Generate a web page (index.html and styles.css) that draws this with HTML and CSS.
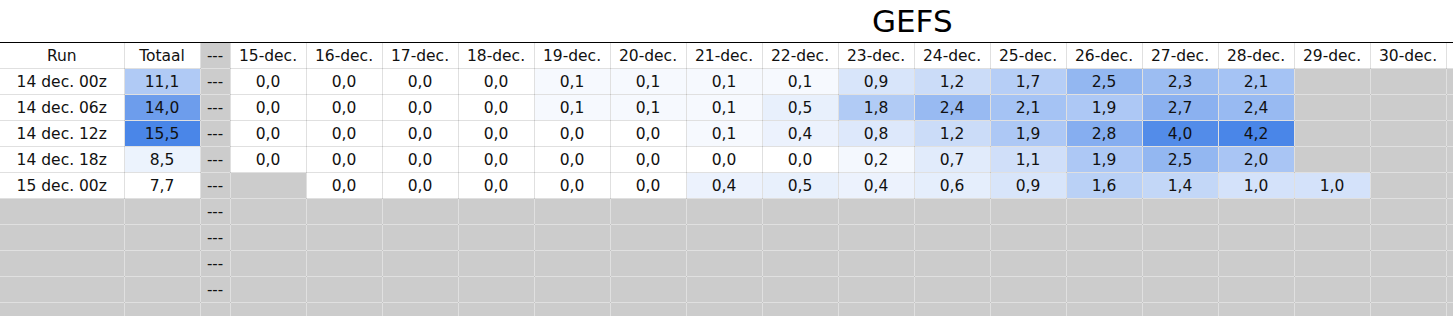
FILE: index.html
```html
<!DOCTYPE html>
<html>
<head>
<meta charset="utf-8">
<link rel="stylesheet" href="styles.css">
</head>
<body>
<div class="title-bar"><h1 class="title">GEFS</h1></div>
<table class="grid">
  <colgroup>
    <col class="w-run"><col class="w-tot"><col class="w-sep">
    <col class="w-day"><col class="w-day"><col class="w-day"><col class="w-day">
    <col class="w-day"><col class="w-day"><col class="w-day"><col class="w-day">
    <col class="w-day"><col class="w-day"><col class="w-day"><col class="w-day">
    <col class="w-day"><col class="w-day"><col class="w-day"><col class="w-day">
    <col class="w-end">
  </colgroup>
  <thead>
    <tr>
      <th>Run</th><th>Totaal</th><th class="sep">---</th>
      <th>15-dec.</th><th>16-dec.</th><th>17-dec.</th><th>18-dec.</th><th>19-dec.</th><th>20-dec.</th><th>21-dec.</th><th>22-dec.</th>
      <th>23-dec.</th><th>24-dec.</th><th>25-dec.</th><th>26-dec.</th><th>27-dec.</th><th>28-dec.</th><th>29-dec.</th><th>30-dec.</th>
      <th class="end"></th>
    </tr>
  </thead>
  <tbody>
    <tr>
      <td>14 dec. 00z</td><td class="heat" style="--p:43.6%">11,1</td><td class="sep">---</td>
      <td>0,0</td><td>0,0</td><td>0,0</td><td>0,0</td>
      <td class="heat" style="--p:5%">0,1</td><td class="heat" style="--p:5%">0,1</td><td class="heat" style="--p:5%">0,1</td><td class="heat" style="--p:5%">0,1</td>
      <td class="heat" style="--p:21.4%">0,9</td><td class="heat" style="--p:28.6%">1,2</td><td class="heat" style="--p:40.5%">1,7</td><td class="heat" style="--p:59.5%">2,5</td>
      <td class="heat" style="--p:54.8%">2,3</td><td class="heat" style="--p:50%">2,1</td><td class="na"></td><td class="na"></td><td class="na"></td>
    </tr>
    <tr>
      <td>14 dec. 06z</td><td class="heat" style="--p:80.8%">14,0</td><td class="sep">---</td>
      <td>0,0</td><td>0,0</td><td>0,0</td><td>0,0</td>
      <td class="heat" style="--p:5%">0,1</td><td class="heat" style="--p:5%">0,1</td><td class="heat" style="--p:5%">0,1</td><td class="heat" style="--p:12.5%">0,5</td>
      <td class="heat" style="--p:42.9%">1,8</td><td class="heat" style="--p:57.1%">2,4</td><td class="heat" style="--p:50%">2,1</td><td class="heat" style="--p:45.2%">1,9</td>
      <td class="heat" style="--p:64.3%">2,7</td><td class="heat" style="--p:57.1%">2,4</td><td class="na"></td><td class="na"></td><td class="na"></td>
    </tr>
    <tr>
      <td>14 dec. 12z</td><td class="heat" style="--p:100%">15,5</td><td class="sep">---</td>
      <td>0,0</td><td>0,0</td><td>0,0</td><td>0,0</td>
      <td>0,0</td><td>0,0</td><td class="heat" style="--p:5%">0,1</td><td class="heat" style="--p:10.5%">0,4</td>
      <td class="heat" style="--p:19%">0,8</td><td class="heat" style="--p:28.6%">1,2</td><td class="heat" style="--p:45.2%">1,9</td><td class="heat" style="--p:66.7%">2,8</td>
      <td class="heat" style="--p:95.2%">4,0</td><td class="heat" style="--p:100%">4,2</td><td class="na"></td><td class="na"></td><td class="na"></td>
    </tr>
    <tr>
      <td>14 dec. 18z</td><td class="heat" style="--p:10.3%">8,5</td><td class="sep">---</td>
      <td>0,0</td><td>0,0</td><td>0,0</td><td>0,0</td>
      <td>0,0</td><td>0,0</td><td>0,0</td><td>0,0</td>
      <td class="heat" style="--p:6%">0,2</td><td class="heat" style="--p:16.7%">0,7</td><td class="heat" style="--p:26.2%">1,1</td><td class="heat" style="--p:45.2%">1,9</td>
      <td class="heat" style="--p:59.5%">2,5</td><td class="heat" style="--p:47.6%">2,0</td><td class="na"></td><td class="na"></td><td class="na"></td>
    </tr>
    <tr>
      <td>15 dec. 00z</td><td>7,7</td><td class="sep">---</td>
      <td class="na"></td><td>0,0</td><td>0,0</td><td>0,0</td>
      <td>0,0</td><td>0,0</td><td class="heat" style="--p:10.5%">0,4</td><td class="heat" style="--p:12.5%">0,5</td>
      <td class="heat" style="--p:10.5%">0,4</td><td class="heat" style="--p:14.3%">0,6</td><td class="heat" style="--p:21.4%">0,9</td><td class="heat" style="--p:38.1%">1,6</td>
      <td class="heat" style="--p:33.3%">1,4</td><td class="heat" style="--p:23.8%">1,0</td><td class="heat" style="--p:23.8%">1,0</td><td class="na"></td><td class="na"></td>
    </tr>
    <tr class="blank"><td></td><td></td><td class="sep">---</td><td></td><td></td><td></td><td></td><td></td><td></td><td></td><td></td><td></td><td></td><td></td><td></td><td></td><td></td><td></td><td></td><td></td></tr>
    <tr class="blank"><td></td><td></td><td class="sep">---</td><td></td><td></td><td></td><td></td><td></td><td></td><td></td><td></td><td></td><td></td><td></td><td></td><td></td><td></td><td></td><td></td><td></td></tr>
    <tr class="blank"><td></td><td></td><td class="sep">---</td><td></td><td></td><td></td><td></td><td></td><td></td><td></td><td></td><td></td><td></td><td></td><td></td><td></td><td></td><td></td><td></td><td></td></tr>
    <tr class="blank"><td></td><td></td><td class="sep">---</td><td></td><td></td><td></td><td></td><td></td><td></td><td></td><td></td><td></td><td></td><td></td><td></td><td></td><td></td><td></td><td></td><td></td></tr>
    <tr class="blank"><td></td><td></td><td class="sep"></td><td></td><td></td><td></td><td></td><td></td><td></td><td></td><td></td><td></td><td></td><td></td><td></td><td></td><td></td><td></td><td></td><td></td></tr>
  </tbody>
</table>
</body>
</html>
```

FILE: styles.css
```css
html, body {
  margin: 0;
  padding: 0;
  background: #ffffff;
}
body {
  font-family: "DejaVu Sans", sans-serif;
  color: #111111;
  overflow: hidden;
}
.title-bar {
  height: 42px;
  display: flex;
  align-items: center;
  padding-left: 872px;
}
.title {
  margin: 0;
  font-size: 31px;
  font-weight: normal;
  line-height: 1;
  color: #000;
}
.grid {
  border-collapse: collapse;
  table-layout: fixed;
  width: 1453px;
  font-size: 15.5px;
}
.w-run { width: 124px; }
.w-tot { width: 76px; }
.w-sep { width: 30px; }
.w-day { width: 76px; }
.w-end { width: 7px; }
.grid th, .grid td {
  height: 25px;
  padding: 0;
  text-align: center;
  vertical-align: middle;
  white-space: nowrap;
  overflow: hidden;
  font-weight: normal;
  border-right: 1px solid rgba(0, 0, 0, 0.12);
  border-bottom: 1px solid rgba(0, 0, 0, 0.12);
}
.grid thead th {
  border-top: 1px solid #000;
}
.grid .sep {
  background: #cccccc;
  font-size: 15px;
}
.grid .na,
.grid .end,
.grid tbody tr td:last-child,
.grid .blank td {
  background: #cccccc;
}
.grid thead .end {
  background: #ffffff;
}
.grid .heat {
  background: color-mix(in srgb, #4a86e8 var(--p), #ffffff);
}
```
